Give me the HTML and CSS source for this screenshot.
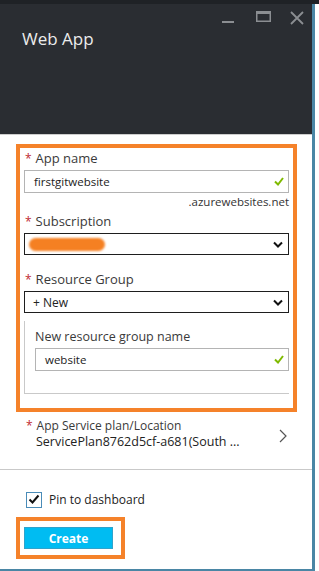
FILE: index.html
```html
<!DOCTYPE html>
<html>
<head>
<meta charset="utf-8">
<link rel="stylesheet" href="styles.css">
</head>
<body>
<div class="topstrip"></div>
<div class="blade">
  <header class="head">
    <div class="controls">
      <svg width="90" height="16" viewBox="0 0 90 16">
        <rect x="4" y="11" width="12" height="2" fill="#8b8e92"/>
        <rect x="38.75" y="1.75" width="13.5" height="9.5" fill="none" stroke="#8b8e92" stroke-width="1.5"/>
        <rect x="38" y="1" width="15" height="3" fill="#8b8e92"/>
        <path d="M73 2 L85 14 M85 2 L73 14" stroke="#8b8e92" stroke-width="1.8"/>
      </svg>
    </div>
    <h1 class="title">Web App</h1>
  </header>
  <div class="content">
    <div class="hl hl-form">
      <div class="lbl"><span class="req">*</span>App name</div>
      <div class="field">
        <span class="val">firstgitwebsite</span>
        <svg class="ok" width="10" height="9" viewBox="0 0 10 9"><path d="M1 4.5 L4 7.5 L9 1" fill="none" stroke="#7fba00" stroke-width="2"/></svg>
      </div>
      <div class="suffix">.azurewebsites.net</div>
      <div class="lbl"><span class="req">*</span>Subscription</div>
      <div class="select">
        <span class="blot"></span>
        <svg class="chev" width="10" height="7" viewBox="0 0 10 7"><path d="M1 1.5 L5 5.5 L9 1.5" fill="none" stroke="#111" stroke-width="2"/></svg>
      </div>
      <div class="lbl lbl-gap"><span class="req">*</span>Resource Group</div>
      <div class="select">
        <span class="val sel">+ New</span>
        <svg class="chev" width="10" height="7" viewBox="0 0 10 7"><path d="M1 1.5 L5 5.5 L9 1.5" fill="none" stroke="#111" stroke-width="2"/></svg>
      </div>
      <div class="sub">
        <div class="sublbl">New resource group name</div>
        <div class="field">
          <span class="val">website</span>
          <svg class="ok" width="10" height="9" viewBox="0 0 10 9"><path d="M1 4.5 L4 7.5 L9 1" fill="none" stroke="#7fba00" stroke-width="2"/></svg>
        </div>
      </div>
    </div>
    <div class="plan">
      <div class="plan-text">
        <div class="plan-lbl"><span class="req">*</span>App Service plan/Location</div>
        <div class="plan-val">ServicePlan8762d5cf-a681(South ...</div>
      </div>
      <svg class="arrow" width="8" height="14" viewBox="0 0 8 14"><path d="M1 1 L7 7 L1 13" fill="none" stroke="#555" stroke-width="1.2"/></svg>
    </div>
    <div class="footer">
      <label class="pin">
        <span class="box"><svg width="12" height="11" viewBox="0 0 12 11"><path d="M1.5 5.5 L4.5 8.5 L10.5 1.5" fill="none" stroke="#111" stroke-width="2"/></svg></span>
        <span>Pin to dashboard</span>
      </label>
      <div class="hl hl-btn">
        <button class="create">Create</button>
      </div>
    </div>
  </div>
</div>
</body>
</html>
```

FILE: styles.css
```css
* { box-sizing: border-box; }
html, body { margin: 0; padding: 0; background: #fff; }
body {
  width: 319px;
  height: 571px;
  overflow: hidden;
  font-family: "Open Sans", "Noto Sans", sans-serif;
  color: #333;
}
.topstrip { height: 4px; background: #1f2226; }
.blade {
  width: 315px;
  height: 567px;
  border-right: 3px solid #4a86a5;
  border-bottom: 2px solid #4a86a5;
  background: #fff;
  display: flex;
  flex-direction: column;
}
.head {
  height: 131px;
  flex: none;
  background: #2a2d32;
  border-bottom: 1px solid #cdcdcd;
  padding: 6px 0 0 22px;
}
.controls { display: flex; justify-content: flex-end; padding-right: 4px; }
.controls svg { display: block; }
.title {
  margin: 2px 0 0;
  font-weight: 400;
  font-size: 17px;
  line-height: 22px;
  color: #ececec;
}
.content { flex: 1; display: flex; flex-direction: column; }
.hl { border: 4px solid #f5822a; }
.hl-form {
  margin: 9px 0 0 16px;
  width: 281px;
  padding: 0 4px 14px 4px;
}
.lbl {
  font-size: 13px;
  line-height: 20px;
  height: 20px;
  margin-bottom: 2px;
  color: #3a3a3a;
}
.lbl-gap { margin-top: 14px; }
.req { color: #c0282f; margin: 0 4px 0 1px; font-size: 12px; }
.field, .select {
  position: relative;
  display: flex;
  align-items: center;
  height: 23px;
  padding: 0 8px 0 9px;
  font-size: 11.5px;
  color: #222;
}
.field { border: 1px solid #b4b4b4; }
.select { border: 1px solid #1e1e1e; height: 22px; padding-left: 8px; }
.val { flex: 1; }
.sel { font-size: 12px; }
.ok { display: block; margin-left: auto; margin-right: -4px; }
.chev { display: block; margin-left: auto; margin-right: -3px; }
.suffix {
  text-align: right;
  font-size: 11.5px;
  line-height: 17px;
  height: 18px;
  color: #333;
}
.blot {
  display: block;
  width: 76px;
  height: 13px;
  margin-left: -4px;
  border-radius: 7px;
  background: #f58022;
  filter: blur(1.2px);
}
.sub {
  margin-top: 8px;
  border-left: 1px solid #c9c9c9;
  border-bottom: 1px solid #c9c9c9;
  padding: 6px 0 22px 10px;
}
.sublbl { font-size: 12.5px; line-height: 20px; height: 20px; margin-bottom: 1px; color: #3a3a3a; }
.plan {
  display: flex;
  padding: 6px 25px 0 25px;
  height: 58px;
  border-bottom: 1px solid #c9c9c9;
  align-items: flex-start;
}
.plan-text { flex: 1; }
.plan-lbl { font-size: 12px; line-height: 16px; color: #3a3a3a; }
.plan-lbl .req { margin-right: 4px; }
.plan-val { font-size: 12.5px; line-height: 16px; color: #222; padding-left: 11px; }
.arrow { display: block; margin-top: 11px; }
.footer { padding: 21px 0 0 16px; }
.pin {
  display: flex;
  align-items: center;
  gap: 7px;
  margin-left: 10px;
  font-size: 12px;
  color: #222;
  height: 17px;
}
.box {
  width: 16px;
  height: 16px;
  border: 1px solid #4a8cb8;
  display: flex;
  align-items: center;
  justify-content: center;
  background: #fff;
}
.box svg { display: block; }
.hl-btn {
  margin-top: 9px;
  width: 109px;
  height: 42px;
  padding: 6px 8px 6px 4px;
}
.create {
  display: block;
  width: 89px;
  height: 22px;
  border: 1px solid #2fa3cc;
  background: #00bcf2;
  color: #fff;
  font-family: "Open Sans", sans-serif;
  font-weight: 700;
  font-size: 12px;
  padding: 0;
}
```
